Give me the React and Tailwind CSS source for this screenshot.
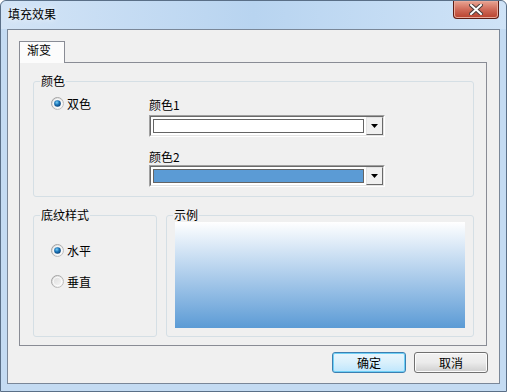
import React from "react";

function Radio({ checked, label }) {
  return (
    <div className="flex h-[13px] items-center gap-[3px]">
      <svg width="13" height="13" viewBox="0 0 13 13">
        <defs>
          <linearGradient id="ring" x1="0" y1="0" x2="1" y2="1">
            <stop offset="0" stopColor="#9a9a9a" />
            <stop offset="1" stopColor="#c8c8c8" />
          </linearGradient>
          <linearGradient id="well" x1="0" y1="0" x2="1" y2="1">
            <stop offset="0" stopColor="#d9d9d9" />
            <stop offset="1" stopColor="#fafafa" />
          </linearGradient>
          <radialGradient id="dot" cx="0.4" cy="0.35" r="0.7">
            <stop offset="0" stopColor="#7ad0f7" />
            <stop offset="0.5" stopColor="#1a74b8" />
            <stop offset="1" stopColor="#0b3f73" />
          </radialGradient>
        </defs>
        <circle cx="6.5" cy="6.5" r="6" fill="url(#well)" stroke="url(#ring)" strokeWidth="1" />
        <circle cx="6.5" cy="6.5" r="4.2" fill="none" stroke="#ffffff" strokeWidth="0.8" />
        {checked && <circle cx="6.5" cy="6.5" r="3.3" fill="url(#dot)" />}
      </svg>
      <span className="leading-[14px]">{label}</span>
    </div>
  );
}

function ColorCombo({ color }) {
  return (
    <div className="flex h-[22px] w-[236px] border border-t-[#a0a0a0] border-l-[#a0a0a0] border-r-white border-b-white">
      <div className="flex flex-1 border border-t-[#696969] border-l-[#696969] border-r-[#e3e3e3] border-b-[#e3e3e3] bg-white">
        <div className="flex-1 p-[2px]">
          <div className="h-full border border-[#646464]" style={{ backgroundColor: color }} />
        </div>
        <div className="flex w-[17px] items-center justify-center border border-t-[#e3e3e3] border-l-[#e3e3e3] border-r-[#696969] border-b-[#696969] bg-[#f0f0f0]">
          <svg width="7" height="4" viewBox="0 0 7 4">
            <path d="M0 0 H7 L3.5 4 Z" fill="#000" />
          </svg>
        </div>
      </div>
    </div>
  );
}

function Button({ children, primary }) {
  return (
    <button
      className={
        primary
          ? "flex h-[21px] w-[74px] items-center justify-center rounded-[3px] border border-[#3c7fb1] bg-gradient-to-b from-[#eaf6fd] via-[#d9f0fc] to-[#bee6fd] leading-[14px] shadow-[inset_0_0_0_1px_#6fd0f6]"
          : "flex h-[21px] w-[74px] items-center justify-center rounded-[3px] border border-[#707070] bg-gradient-to-b from-[#f2f2f2] via-[#ebebeb] to-[#cfcfcf] leading-[14px] shadow-[inset_0_0_0_1px_#fcfcfc]"
      }
    >
      {children}
    </button>
  );
}

export default function App() {
  return (
    <div className="flex h-[392px] w-[507px] flex-col rounded-t-[6px] border border-[#5a6f87] bg-[#c4dbf2] font-['Noto_Sans_CJK_SC',sans-serif] text-[12px] text-black">
      <div className="flex h-[28px] items-start rounded-t-[6px] bg-gradient-to-r from-[#d3e4f6] via-[#b8d4f0] to-[#cfe3f7]">
        <span className="pl-[7px] pt-[6px] leading-[14px] [text-shadow:0_0_6px_#ffffff]">填充效果</span>
        <div className="ml-auto mr-[7px] flex h-[18px] w-[46px] items-center justify-center rounded-b-[4px] border border-t-0 border-[#5e1d14] bg-gradient-to-b from-[#e8a493] via-[#cf6a59] to-[#b8402c] shadow-[inset_0_0_0_1px_#e9a99a]">
          <svg width="14" height="11" viewBox="0 0 14 11">
            <path d="M2 1 L12 10 M12 1 L2 10" stroke="#4a3c3a" strokeWidth="4" strokeLinecap="square" />
            <path d="M2 1 L12 10 M12 1 L2 10" stroke="#ffffff" strokeWidth="2" strokeLinecap="square" />
          </svg>
        </div>
      </div>

      <div className="mx-[6px] flex h-[355px] flex-col border border-[#7a8798] bg-[#f0f0f0]">
        <div className="ml-[11px] mt-[11px] flex">
          <div className="relative z-10 -mb-[1px] flex h-[22px] w-[46px] items-start border border-b-0 border-[#898c95] bg-[#fcfcfc] pl-[7px] pt-[1px] leading-[14px]">
            渐变
          </div>
        </div>
        <div className="ml-[11px] flex h-[284px] w-[468px] flex-col border border-[#898c95] bg-[#f0f0f0]">
          <fieldset className="ml-[13px] mt-[11px] w-[441px] rounded-[3px] border border-[#d5dfe5] px-[6px] pb-[9px]">
            <legend className="px-[1px] leading-[14px]">颜色</legend>
            <div className="flex">
              <div className="w-[109px] pl-[11px] pt-[9px]">
                <Radio checked label="双色" />
              </div>
              <div className="flex flex-col pt-[10px]">
                <span className="leading-[14px]">颜色1</span>
                <div className="mt-[3px]">
                  <ColorCombo color="#ffffff" />
                </div>
                <span className="mt-[13px] leading-[14px]">颜色2</span>
                <div className="mt-[1px]">
                  <ColorCombo color="#5b9bd5" />
                </div>
              </div>
            </div>
          </fieldset>

          <div className="ml-[13px] mt-[11px] flex gap-[9px]">
            <fieldset className="h-[129px] w-[124px] rounded-[3px] border border-[#d5dfe5] px-[6px]">
              <legend className="px-[1px] leading-[14px]">底纹样式</legend>
              <div className="flex flex-col pl-[11px]">
                <div className="mt-[22px]">
                  <Radio checked label="水平" />
                </div>
                <div className="mt-[18px]">
                  <Radio label="垂直" />
                </div>
              </div>
            </fieldset>
            <fieldset className="h-[129px] w-[308px] rounded-[3px] border border-[#d5dfe5] px-[6px]">
              <legend className="px-[1px] leading-[14px]">示例</legend>
              <div className="mx-[2px] h-[106px] bg-gradient-to-b from-[#ffffff] to-[#5b9bd5]" />
            </fieldset>
          </div>
        </div>

        <div className="mt-[6px] flex justify-end gap-[8px] pr-[11px]">
          <Button primary>确定</Button>
          <Button>取消</Button>
        </div>
      </div>
    </div>
  );
}
